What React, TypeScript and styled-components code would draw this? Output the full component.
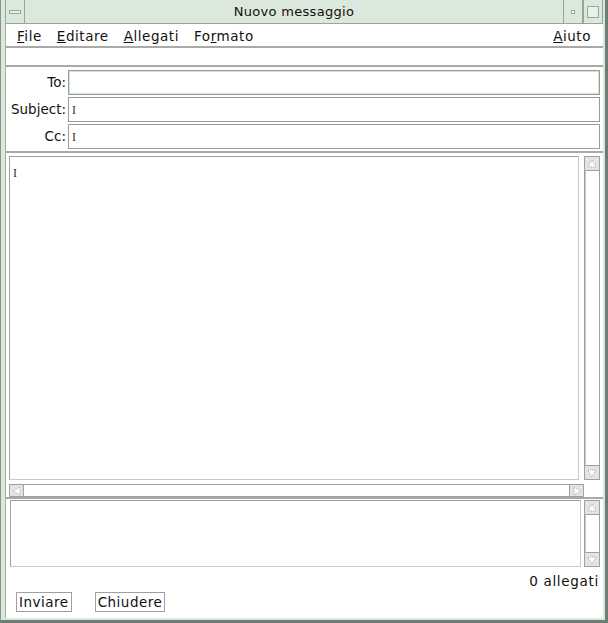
import React from "react";
import styled, { createGlobalStyle } from "styled-components";

const Global = createGlobalStyle`
  html, body { margin: 0; padding: 0; background: #dbe8dc; }
  body { font-family: "DejaVu Sans", "Liberation Sans", sans-serif; }
`;

const Frame = styled.div`
  width: 608px;
  height: 623px;
  box-sizing: border-box;
  background: #dbe8dc;
  border-left: 1px solid #8a948c;
  border-right: 3px solid #6f7c74;
  border-bottom: 3px solid #6f7c74;
  display: flex;
  flex-direction: column;
  padding: 0 2px 2px 4px;
`;

const TitleBar = styled.div`
  height: 24px;
  display: flex;
  align-items: stretch;
  border-bottom: 1px solid #9aa49c;
  box-sizing: border-box;
`;

const TitleBtn = styled.div`
  width: 18px;
  border: 1px solid #9aa49c;
  border-top: none;
  border-bottom: none;
  display: flex;
  align-items: center;
  justify-content: center;
`;

const Title = styled.div`
  flex: 1;
  text-align: center;
  font-size: 13px;
  letter-spacing: 0.3px;
  line-height: 23px;
  color: #111;
`;

const Content = styled.div`
  flex: 1;
  background: #fff;
  display: flex;
  flex-direction: column;
  border-left: 1px solid #a8aca8;
`;

const MenuBar = styled.div`
  height: 22px;
  display: flex;
  align-items: center;
  padding: 1px 12px 0 11px;
  gap: 15px;
  font-size: 13.5px;
  letter-spacing: 0.55px;
  border-bottom: 2px solid #a9a9a9;
  box-sizing: border-box;
  height: 24px;
`;

const MenuItem = styled.span<{ $right?: boolean }>`
  margin-left: ${(p) => (p.$right ? "auto" : "0")};
  color: #111;
`;

const U = styled.span`
  text-decoration: underline;
`;

const Toolbar = styled.div`
  height: 17px;
  border-bottom: 2px solid #a9a9a9;
`;

const Fields = styled.div`
  display: flex;
  flex-direction: column;
  gap: 2px;
  padding: 3px 3px 0 0;
`;

const FieldRow = styled.div`
  display: flex;
  align-items: stretch;
  height: 25px;
`;

const Label = styled.div`
  width: 60px;
  text-align: right;
  font-size: 13.5px;
  line-height: 25px;
  color: #111;
  padding-right: 2px;
`;

const Input = styled.div<{ $focus?: boolean }>`
  flex: 1;
  box-sizing: border-box;
  border: 1px solid #9a9a9a;
  ${(p) => (p.$focus ? "box-shadow: inset 0 0 0 1px #d6e4d8;" : "")}
  display: flex;
  align-items: center;
  padding-left: 3px;
`;

const Caret = styled.span`
  font-family: "Liberation Serif", serif;
  font-size: 12px;
  color: #333;
  line-height: 1;
`;

const Sep = styled.div<{ $gap: number }>`
  height: 0;
  border-top: 2px solid #a9a9a9;
  margin-top: ${(p) => p.$gap}px;
`;

const BodyArea = styled.div`
  display: flex;
  gap: 5px;
  padding: 3px 3px 0 3px;
  height: 327px;
  box-sizing: border-box;
`;

const TextBox = styled.div`
  flex: 1;
  border: 1px solid #a0a0a0;
  border-right-color: #c8c8c8;
  border-bottom-color: #c8c8c8;
  padding: 5px 3px;
`;

const VScroll = styled.div`
  width: 14px;
  border: 1px solid #a0a0a0;
  display: flex;
  flex-direction: column;
  background: #fff;
`;

const Arrow = styled.div`
  height: 13px;
  background: #e4e4e4;
  display: flex;
  align-items: center;
  justify-content: center;
`;

const Trough = styled.div`
  flex: 1;
  border-top: 1px solid #a0a0a0;
  border-bottom: 1px solid #a0a0a0;
  border-left: 1px solid #c8c8c8;
`;

const HScrollRow = styled.div`
  display: flex;
  padding: 4px 0 0 3px;
`;

const HScroll = styled.div`
  width: 573px;
  height: 11px;
  border: 1px solid #a0a0a0;
  display: flex;
  background: #fff;
`;

const HArrow = styled.div`
  width: 13px;
  background: #e4e4e4;
  display: flex;
  align-items: center;
  justify-content: center;
`;

const HTrough = styled.div`
  flex: 1;
  border-left: 1px solid #a0a0a0;
  border-right: 1px solid #a0a0a0;
`;

const AttachArea = styled.div`
  display: flex;
  gap: 3px;
  padding: 1px 3px 0 4px;
  height: 68px;
  box-sizing: border-box;
`;

const Count = styled.div`
  text-align: right;
  font-size: 13.5px;
  letter-spacing: 0.7px;
  color: #111;
  padding: 6px 4px 0 0;
  line-height: 16px;
`;

const Buttons = styled.div`
  display: flex;
  gap: 23px;
  padding: 3px 0 0 10px;
`;

const Button = styled.div`
  border: 1px solid #a0a0a0;
  font-size: 13.5px;
  letter-spacing: 0.5px;
  line-height: 18px;
  padding: 0 2px;
  color: #111;
`;

const Tri = ({ dir }: { dir: "up" | "down" | "left" | "right" }) => {
  const pts = {
    up: "5,1 9,8 1,8",
    down: "1,2 9,2 5,9",
    left: "1,5 8,1 8,9",
    right: "2,1 9,5 2,9",
  }[dir];
  return (
    <svg width="10" height="10" viewBox="0 0 10 10">
      <polygon points={pts} fill="#fff" stroke="#a8a8a8" strokeWidth="1" strokeDasharray="1 1" />
    </svg>
  );
};

const VBar = () => (
  <VScroll>
    <Arrow><Tri dir="up" /></Arrow>
    <Trough />
    <Arrow><Tri dir="down" /></Arrow>
  </VScroll>
);

export default function App() {
  return (
    <>
      <Global />
      <Frame>
        <TitleBar>
          <TitleBtn>
            <svg width="12" height="4"><rect x="0.5" y="0.5" width="11" height="3" fill="#e8f0ea" stroke="#9aa49c" /></svg>
          </TitleBtn>
          <Title>Nuovo messaggio</Title>
          <TitleBtn>
            <svg width="4" height="4"><rect x="0.5" y="0.5" width="3" height="3" fill="#fff" stroke="#9aa49c" /></svg>
          </TitleBtn>
          <TitleBtn>
            <svg width="12" height="12"><rect x="0.5" y="0.5" width="11" height="11" fill="#e8f0ea" stroke="#9aa49c" /></svg>
          </TitleBtn>
        </TitleBar>
        <Content>
          <MenuBar>
            <MenuItem><U>F</U>ile</MenuItem>
            <MenuItem><U>E</U>ditare</MenuItem>
            <MenuItem><U>A</U>llegati</MenuItem>
            <MenuItem>Fo<U>r</U>mato</MenuItem>
            <MenuItem $right><U>A</U>iuto</MenuItem>
          </MenuBar>
          <Toolbar />
          <Fields>
            <FieldRow>
              <Label>To:</Label>
              <Input $focus />
            </FieldRow>
            <FieldRow>
              <Label>Subject:</Label>
              <Input><Caret>I</Caret></Input>
            </FieldRow>
            <FieldRow>
              <Label>Cc:</Label>
              <Input><Caret>I</Caret></Input>
            </FieldRow>
          </Fields>
          <Sep $gap={2} />
          <BodyArea>
            <TextBox><Caret>I</Caret></TextBox>
            <VBar />
          </BodyArea>
          <HScrollRow>
            <HScroll>
              <HArrow><Tri dir="left" /></HArrow>
              <HTrough />
              <HArrow><Tri dir="right" /></HArrow>
            </HScroll>
          </HScrollRow>
          <Sep $gap={0} />
          <AttachArea>
            <TextBox />
            <VBar />
          </AttachArea>
          <Count>0 allegati</Count>
          <Buttons>
            <Button>Inviare</Button>
            <Button>Chiudere</Button>
          </Buttons>
        </Content>
      </Frame>
    </>
  );
}
